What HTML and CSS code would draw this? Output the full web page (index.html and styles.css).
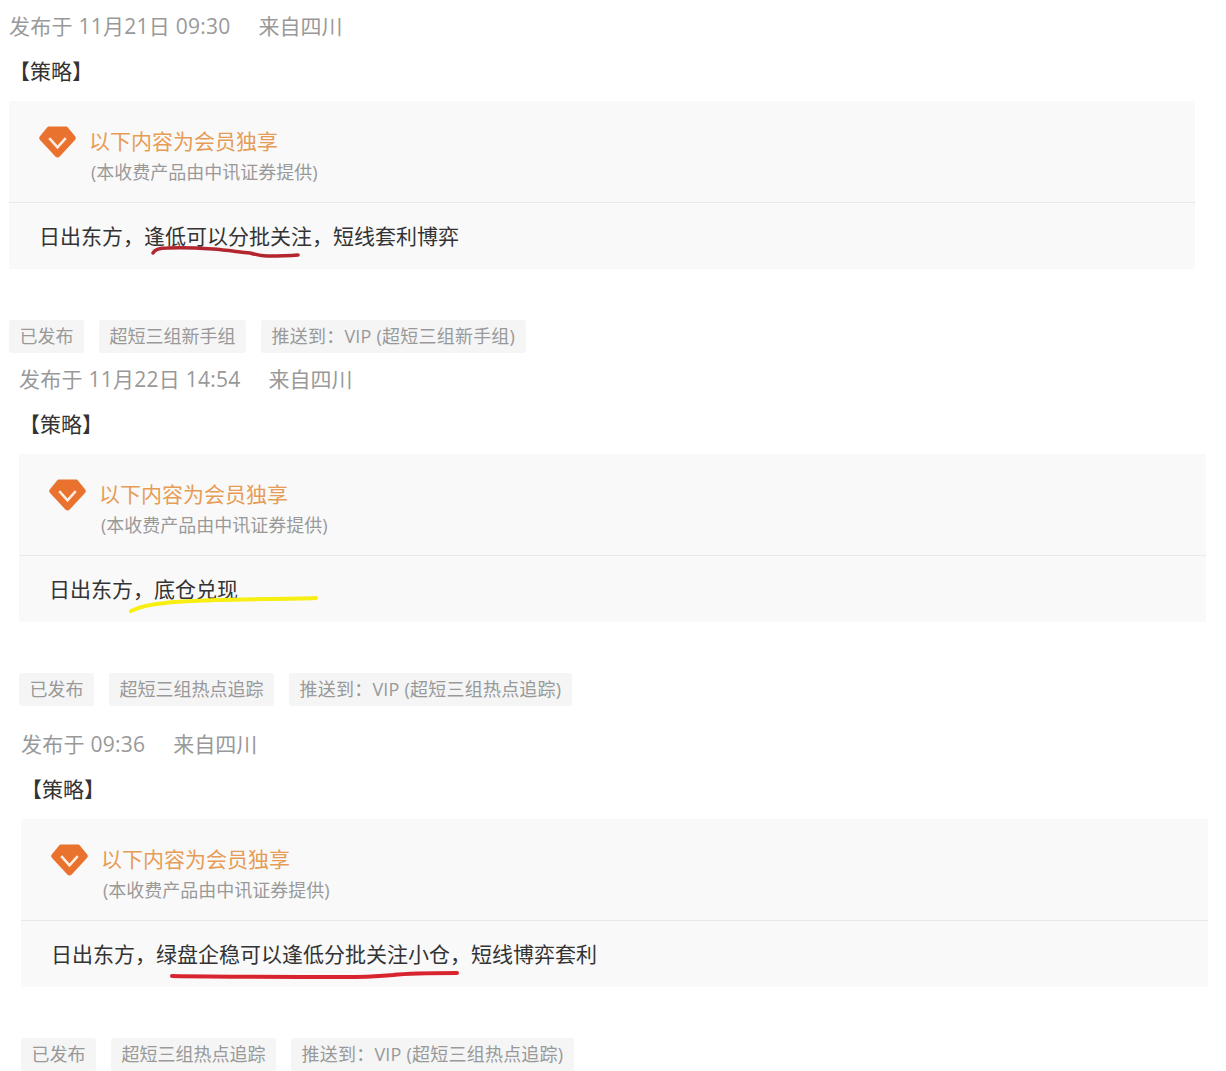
FILE: index.html
```html
<!DOCTYPE html>
<html lang="zh-CN">
<head>
<meta charset="utf-8">
<title>发布记录</title>
<link rel="stylesheet" href="styles.css">
</head>
<body>
<svg class="defs" width="0" height="0" aria-hidden="true"><defs>
  <symbol id="gem" viewBox="0 0 38 33">
    <path d="M10 .5h18a2 2 0 0 1 1.5.7l7.6 9.3a3 3 0 0 1-.1 3.9L21.3 31.500a3 3 0 0 1-4.500 0L1 14.400a3 3 0 0 1-.1-3.900l7.600-9.300A2 2 0 0 1 10 .5z" fill="#e9722f"/>
    <path d="M10.500 12.500 19 22l8.500-9.500" fill="none" stroke="#fdeee0" stroke-width="2.600"/>
  </symbol>
</defs></svg>

<section class="post post-a">
  <div class="meta"><span>发布于 11月21日 09:30</span><span>来自四川</span></div>
  <div class="kind">【策略】</div>
  <div class="card">
    <div class="card-head">
      <svg class="gem"><use href="#gem"/></svg>
      <div class="card-titles">
        <div class="card-title">以下内容为会员独享</div>
        <div class="card-sub">(本收费产品由中讯证券提供)</div>
      </div>
    </div>
    <div class="card-body">日出东方，逢低可以分批关注，短线套利博弈
      <svg class="ink"><path class="ink-dark" d="M144 50C146 46 152 45 158 45C175 44 190 45 204 46C218 47 230 49 241 50C248 52 252 53 258 53C268 53 278 53 289 52"/></svg>
    </div>
  </div>
  <div class="tags"><span class="tag">已发布</span><span class="tag">超短三组新手组</span><span class="tag">推送到：VIP (超短三组新手组)</span></div>
</section>

<section class="post post-b">
  <div class="meta"><span>发布于 11月22日 14:54</span><span>来自四川</span></div>
  <div class="kind">【策略】</div>
  <div class="card">
    <div class="card-head">
      <svg class="gem"><use href="#gem"/></svg>
      <div class="card-titles">
        <div class="card-title">以下内容为会员独享</div>
        <div class="card-sub">(本收费产品由中讯证券提供)</div>
      </div>
    </div>
    <div class="card-body">日出东方，底仓兑现
      <svg class="ink"><path class="ink-yellow" d="M112 55C122 50 134 48 146 47C162 45 180 45 196 44C230 43 265 43 297 42"/></svg>
    </div>
  </div>
  <div class="tags"><span class="tag">已发布</span><span class="tag">超短三组热点追踪</span><span class="tag">推送到：VIP (超短三组热点追踪)</span></div>
</section>

<section class="post post-c">
  <div class="meta"><span>发布于 09:36</span><span>来自四川</span></div>
  <div class="kind">【策略】</div>
  <div class="card">
    <div class="card-head">
      <svg class="gem"><use href="#gem"/></svg>
      <div class="card-titles">
        <div class="card-title">以下内容为会员独享</div>
        <div class="card-sub">(本收费产品由中讯证券提供)</div>
      </div>
    </div>
    <div class="card-body">日出东方，绿盘企稳可以逢低分批关注小仓，短线博弈套利
      <svg class="ink"><path class="ink-red" d="M151 55C210 56 280 56 334 56C350 56 355 55 372 54C390 52 415 52 436 52"/></svg>
    </div>
  </div>
  <div class="tags"><span class="tag">已发布</span><span class="tag">超短三组热点追踪</span><span class="tag">推送到：VIP (超短三组热点追踪)</span></div>
</section>
</body>
</html>
```
FILE: styles.css
```css
* { box-sizing: border-box; }

html, body { margin: 0; padding: 0; background: #fff; }

body {
  font-family: "Open Sans", "Noto Sans CJK SC", sans-serif;
  color: #333;
  overflow: hidden;
}

.defs { position: absolute; }

.post-a { margin-left: 9px; width: 1186px; }
.post-b { margin-left: 19px; width: 1187px; }
.post-c { margin-left: 21px; width: 1187px; margin-top: 12px; }

.meta {
  display: flex;
  gap: 28px;
  height: 52px;
  line-height: 52px;
  font-size: 21px;
  color: #999;
}

.meta span:first-child { letter-spacing: .25px; }

.kind {
  height: 38px;
  line-height: 38px;
  font-size: 21px;
  color: #333;
  margin-bottom: 11px;
}

.card { background: #f9f9f9; height: 168px; }

.card-head {
  display: flex;
  gap: 13px;
  height: 102px;
  padding: 25px 0 0 30px;
  border-bottom: 1px solid #e8e8e8;
}

.gem { width: 37px; height: 32px; flex: none; }

.card-title {
  font-size: 21px;
  height: 30px;
  line-height: 31px;
  color: #e79c56;
}

.card-sub {
  font-size: 18px;
  line-height: 32px;
  padding-left: 2px;
  color: #999;
}

.card-body {
  position: relative;
  height: 66px;
  padding-left: 30px;
  font-size: 21px;
  line-height: 66px;
  color: #333;
}

.ink {
  position: absolute;
  left: 0;
  top: 0;
  width: 100%;
  height: 100%;
  overflow: visible;
  pointer-events: none;
}

.ink path { fill: none; stroke-linecap: round; stroke-linejoin: round; }
.ink-dark { stroke: #b3262f; stroke-width: 3.500; }
.ink-yellow { stroke: #f7ee12; stroke-width: 4; }
.ink-red { stroke: #d8242e; stroke-width: 4; }

.tags {
  display: flex;
  gap: 15px;
  margin-top: 51px;
}

.tag {
  height: 33px;
  line-height: 33px;
  padding: 0 10.500px;
  font-size: 18px;
  color: #999;
  background: #f5f5f5;
  border-radius: 3px;
  white-space: nowrap;
}

.tag:last-child { letter-spacing: .22px; }
```
